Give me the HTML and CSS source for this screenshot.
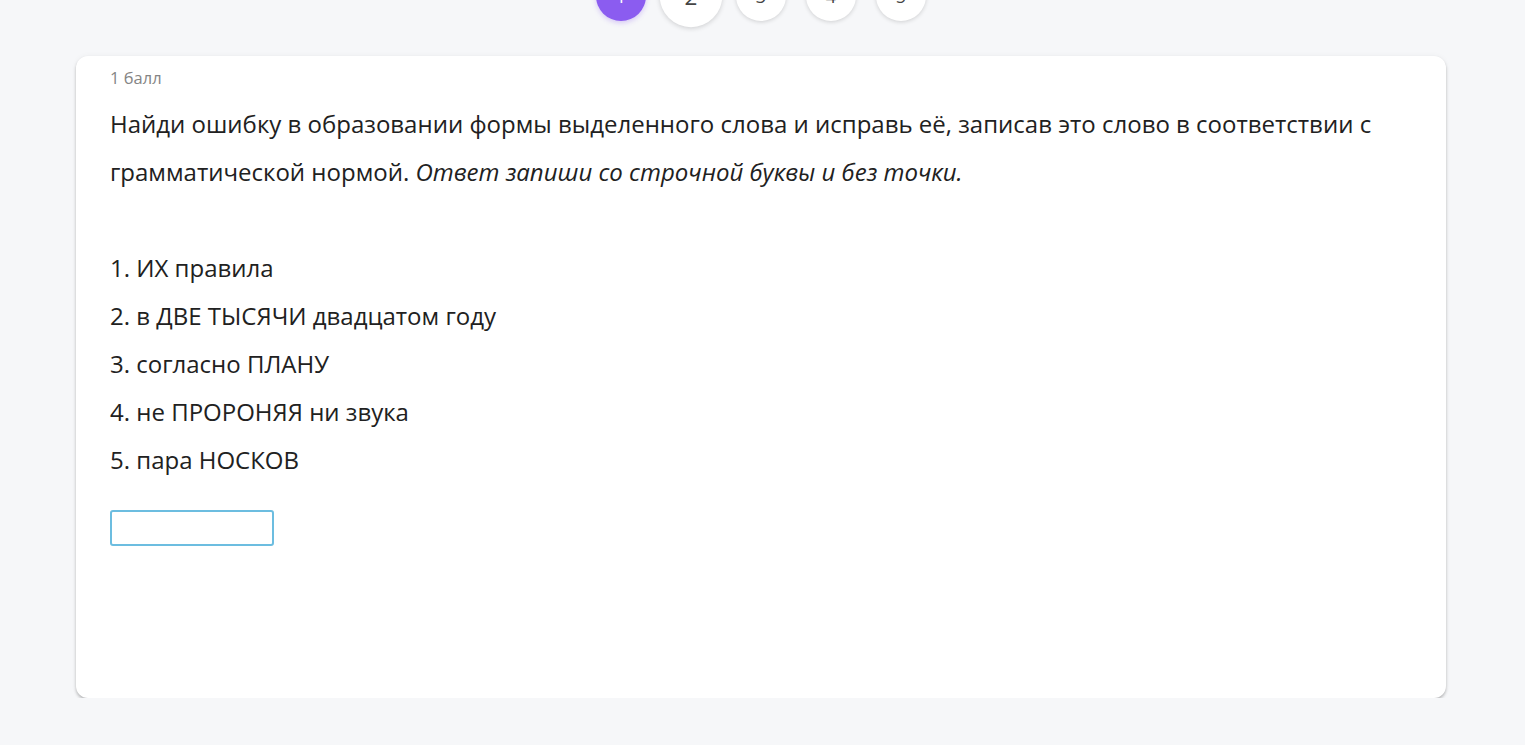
FILE: index.html
```html
<!DOCTYPE html>
<html lang="ru">
<head>
<meta charset="utf-8">
<title>Задание</title>
<link rel="stylesheet" href="styles.css">
</head>
<body>
<nav class="steps">
  <span class="step step-active">1</span>
  <span class="step step-current">2</span>
  <span class="step">3</span>
  <span class="step">4</span>
  <span class="step">5</span>
</nav>
<main class="card">
  <div class="points">1 балл</div>
  <div class="task">
    <p class="question">Найди ошибку в образовании формы выделенного слова и исправь её, записав это слово в соответствии с грамматической нормой. <em>Ответ запиши со строчной буквы и без точки.</em></p>
    <p class="blank">&nbsp;</p>
    <p>1. ИХ правила</p>
    <p>2. в ДВЕ ТЫСЯЧИ двадцатом году</p>
    <p>3. согласно ПЛАНУ</p>
    <p>4. не ПРОРОНЯЯ ни звука</p>
    <p>5. пара НОСКОВ</p>
  </div>
  <input class="answer" type="text" aria-label="Ответ">
</main>
</body>
</html>
```
FILE: styles.css
```css
html, body {
  margin: 0;
  padding: 0;
  background: #f6f7f9;
  font-family: "Open Sans", "Noto Sans", sans-serif;
  color: #212121;
  overflow: hidden;
}

.steps {
  display: flex;
  justify-content: center;
  gap: 20px;
  height: 50px;
  margin-top: -29px;
  padding-right: 3px;
}

.step {
  width: 50px;
  height: 50px;
  border-radius: 50%;
  background: #fff;
  box-shadow: 0 1px 4px rgba(0, 0, 0, 0.16);
  display: flex;
  align-items: center;
  justify-content: center;
  font-size: 18px;
  color: #444;
}

.step-active {
  background: #8b5cf0;
  color: #fff;
  box-shadow: 0 2px 5px rgba(139, 92, 240, 0.3);
}

.step-current {
  transform: scale(1.25);
}

.card {
  margin: 35px 79px 0 76px;
  height: 642px;
  box-sizing: border-box;
  background: #fff;
  border-radius: 12px;
  box-shadow: 0 2px 3px rgba(0, 0, 0, 0.25), 0 0 6px rgba(0, 0, 0, 0.04);
  padding: 11px 34px 12px;
}

.points {
  font-size: 16.5px;
  line-height: 22px;
  color: #858585;
}

.task {
  margin-top: 11px;
  font-size: 24px;
  line-height: 48px;
}

.task p {
  margin: 0;
}

.task em {
  font-style: italic;
}

.answer {
  display: block;
  margin-top: 26px;
  width: 164px;
  height: 36px;
  box-sizing: border-box;
  border: 2px solid #6cbde0;
  border-radius: 3px;
  padding: 0 8px;
  font-family: inherit;
  font-size: 16px;
  outline: none;
  background: #fff;
}
```
